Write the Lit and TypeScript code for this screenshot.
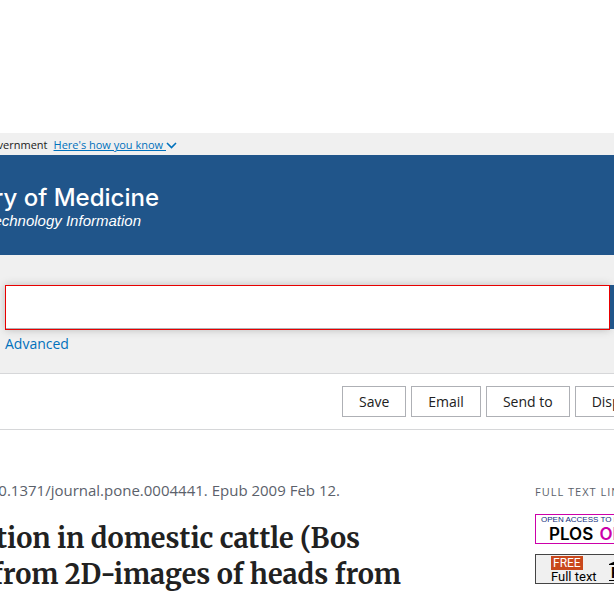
import { LitElement, html, css } from "lit";
import { customElement } from "lit/decorators.js";

@customElement("app-root")
export class AppRoot extends LitElement {
  static styles = css`
    :host {
      display: block;
      min-height: 100vh;
      overflow: hidden;
      box-sizing: border-box;
      padding-top: 133px;
      background: #fff;
      color: #212121;
      font: 14px/20px "Open Sans", "Noto Sans", sans-serif;
    }
    * { box-sizing: border-box; }
    a { color: #0071bc; text-decoration: none; }
    .clip-start { display: flex; justify-content: flex-end; white-space: nowrap; }
    .banner {
      height: 22px;
      background: #f0f0f0;
      font-size: 11px;
      line-height: 24px;
    }
    .banner .clip-start { width: 177px; }
    .banner a { margin-left: 6px; display: flex; align-items: center; }
    .banner u { white-space: pre; }
    .banner svg { width: 11px; height: 7px; }
    .brand {
      height: 100px;
      padding-top: 30px;
      background: #20558a;
      color: #fff;
      font-family: "Liberation Sans", Arial, sans-serif;
    }
    .name { width: 159px; font: 500 24px/26px Inter, "Liberation Sans", sans-serif; }
    .dept { width: 141px; font-size: 15px; line-height: 20px; font-style: italic; }
    .search {
      height: 119px;
      padding: 30px 0 0 5px;
      background: #f0f0f0;
      border-bottom: 1px solid #d6d7d9;
    }
    .field { display: flex; height: 45px; }
    .field input {
      flex: 1;
      min-width: 0;
      border: 1px solid #e80000;
      border-radius: 0;
      background: #fff;
      outline: none;
      box-shadow: 0 0 8px #bbb, inset 0 -1px #aeb0b5;
      font: inherit;
    }
    .field button { width: 4px; height: 44px; padding: 0; border: 0; background: #20558a; }
    .search a { display: inline-block; margin-top: 4px; }
    .actions {
      height: 56px;
      padding: 12px 0 0 342px;
      border-bottom: 1px solid #d6d7d9;
      display: flex;
      gap: 5px;
    }
    .actions button {
      flex: none;
      height: 31px;
      padding: 0 16px;
      border: 1px solid #aeb0b5;
      background: #fff;
      color: #212121;
      font: inherit;
    }
    .content { display: flex; justify-content: space-between; padding-top: 49px; }
    .article { width: 401px; flex: none; }
    .cite { width: 340px; color: #5b616b; font-size: 15px; line-height: 22px; }
    h1 {
      margin: 19px 0 0;
      font: 700 27px/36px Merriweather, "Noto Serif", "DejaVu Serif", "Liberation Serif", serif;
    }
    .line1 { width: 360px; }
    aside { width: 79px; overflow: hidden; white-space: nowrap; }
    h2 { margin: 3px 0 12px; font-size: 11px; line-height: 20px; font-weight: 400; letter-spacing: 1px; color: #5b616b; }
    .badge { display: block; width: 120px; height: 30px; margin-bottom: 10px; border: 1px solid #c0a; color: #000; }
    .plos { font: 8px/10px "Liberation Sans", sans-serif; color: #112e7b; padding-left: 5px; }
    .plos b { display: block; padding-left: 8px; font: 600 17px/18px Inter, sans-serif; color: #000; }
    .plos i { margin-left: 2px; font-style: normal; color: #c0a; }
    .free { display: flex; gap: 12px; border-color: #444; background: #f0f0f0; padding: 1px 0 0 15px; font: 13px/14px Roboto, sans-serif; }
    .free span { display: block; }
    .tag { width: 32px; height: 14px; padding-left: 2px; background: #c9481c; color: #fff; font-size: 12px; }
    .free svg { width: 42px; height: 26px; }
    .free text { font: 700 15px Roboto, sans-serif; }
  `;

  render() {
    return html`
      <div class="banner"><div class="clip-start">
        <span>An official website of the United States government</span>
        <a href="#"><u>Here's how you know </u><svg viewBox="0 0 11 7"><path d="M1 1l4.5 4.5L10 1" fill="none" stroke="#0071bc" stroke-width="1.6"/></svg></a>
      </div></div>
      <header class="brand">
        <div class="name clip-start">National Library of Medicine</div>
        <div class="dept clip-start">National Center for Biotechnology Information</div>
      </header>
      <form class="search">
        <div class="field"><input type="search" aria-label="Search"><button type="button" aria-label="Search"></button></div>
        <a href="#">Advanced</a>
      </form>
      <div class="actions">
        <button>Save</button><button>Email</button><button>Send to</button><button>Display options</button>
      </div>
      <div class="content">
        <main class="article">
          <div class="cite clip-start">doi: 10.1371/journal.pone.0004441. Epub 2009 Feb 12.</div>
          <h1><div class="line1 clip-start">tion in domestic cattle (Bos</div><div class="clip-start">from 2D-images of heads from</div></h1>
        </main>
        <aside>
          <h2>FULL TEXT LINKS</h2>
          <a class="badge plos" href="#">OPEN ACCESS TO FULL TEXT<b>PLOS <i>ONE</i></b></a>
          <a class="badge free" href="#"><div><span class="tag">FREE</span><span>Full text</span></div>
            <svg viewBox="0 0 42 26"><path d="M0 8l9-4h24l9 4v1H0zM0 24h42v1H0z"/><text x="2" y="22">PMC</text></svg></a>
        </aside>
      </div>
    `;
  }
}
